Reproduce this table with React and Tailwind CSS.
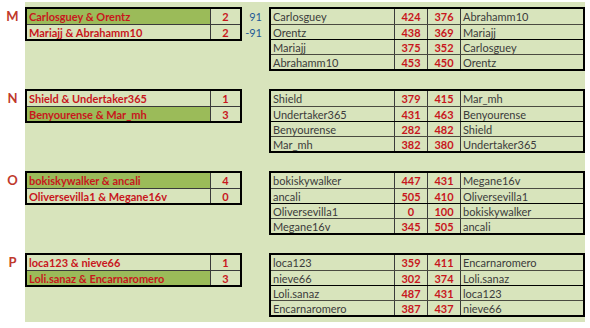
import React from 'react';

const sections = [
  {
    letter: 'M',
    pairs: [
      { name: 'Carlosguey & Orentz', score: 2, win: true, diff: '91' },
      { name: 'Mariajj & Abrahamm10', score: 2, diff: '-91' },
    ],
    games: [
      ['Carlosguey', 424, 376, 'Abrahamm10'],
      ['Orentz', 438, 369, 'Mariajj'],
      ['Mariajj', 375, 352, 'Carlosguey'],
      ['Abrahamm10', 453, 450, 'Orentz'],
    ],
  },
  {
    letter: 'N',
    pairs: [
      { name: 'Shield & Undertaker365', score: 1 },
      { name: 'Benyourense & Mar_mh', score: 3, win: true },
    ],
    games: [
      ['Shield', 379, 415, 'Mar_mh'],
      ['Undertaker365', 431, 463, 'Benyourense'],
      ['Benyourense', 282, 482, 'Shield'],
      ['Mar_mh', 382, 380, 'Undertaker365'],
    ],
  },
  {
    letter: 'O',
    pairs: [
      { name: 'bokiskywalker & ancali', score: 4, win: true },
      { name: 'Oliversevilla1 & Megane16v', score: 0 },
    ],
    games: [
      ['bokiskywalker', 447, 431, 'Megane16v'],
      ['ancali', 505, 410, 'Oliversevilla1'],
      ['Oliversevilla1', 0, 100, 'bokiskywalker'],
      ['Megane16v', 345, 505, 'ancali'],
    ],
  },
  {
    letter: 'P',
    pairs: [
      { name: 'loca123 & nieve66', score: 1 },
      { name: 'Loli.sanaz & Encarnaromero', score: 3, win: true },
    ],
    games: [
      ['loca123', 359, 411, 'Encarnaromero'],
      ['nieve66', 302, 374, 'Loli.sanaz'],
      ['Loli.sanaz', 487, 431, 'loca123'],
      ['Encarnaromero', 387, 437, 'nieve66'],
    ],
  },
];

const PairTable = ({ pairs }) => (
  <div className="w-[217px] border-2 border-black">
    {pairs.map((p, i) => (
      <div key={i} className={`flex h-[15px] ${i > 0 ? 'border-t border-[#3a3a3a]' : ''}`}>
        <div
          className={`w-[184px] border-r border-[#3a3a3a] pl-[2px] flex items-center font-bold text-[#c8161d] ${
            p.win ? 'bg-[#9bbb59]' : ''
          }`}
        >
          {p.name}
        </div>
        <div className="flex-1 flex items-center justify-center font-bold text-[#c8161d]">{p.score}</div>
      </div>
    ))}
  </div>
);

const DiffColumn = ({ pairs }) => (
  <div className="w-[27px] pt-[2px]">
    {pairs.map((p, i) => (
      <div key={i} className={`h-[15px] ${i > 0 ? 'mt-px' : ''} flex items-center justify-end pr-[7px] text-[#1f5a96]`}>
        {p.diff || ''}
      </div>
    ))}
  </div>
);

const GameTable = ({ games }) => (
  <div className="w-[316px] border-2 border-black">
    {games.map((g, i) => (
      <div
        key={i}
        className={`flex h-[15px] ${i === 2 ? 'border-t border-black' : i > 0 ? 'border-t border-[#4a4a40]' : ''}`}
      >
        <div className="w-[124px] border-r border-[#3a3a3a] pl-[2px] flex items-center text-[#3b3b3b]">{g[0]}</div>
        <div className="w-[33px] border-r border-[#3a3a3a] flex items-center justify-center font-bold text-[#c8161d]">
          {g[1]}
        </div>
        <div className="w-[33px] border-r border-[#3a3a3a] flex items-center justify-center font-bold text-[#c8161d]">
          {g[2]}
        </div>
        <div className="flex-1 pl-[2px] flex items-center text-[#3b3b3b]">{g[3]}</div>
      </div>
    ))}
  </div>
);

export default function App() {
  return (
    <div className="w-[590px] h-[328px] bg-white pt-[2px] flex text-[11px] leading-none font-['Lato',sans-serif]">
      <div className="w-[25px] pt-[5px] flex flex-col gap-[15px]">
        {sections.map((s) => (
          <div key={s.letter} className="h-[67px]">
            <div className="h-[19px] flex items-center justify-center font-bold text-[13px] text-[#c0392b]">
              {s.letter}
            </div>
          </div>
        ))}
      </div>
      <div className="w-[560px] h-[320px] bg-[#d8e4bc] pt-[5px] flex flex-col gap-[15px]">
        {sections.map((s) => (
          <div key={s.letter} className="flex items-start h-[67px]">
            <PairTable pairs={s.pairs} />
            <DiffColumn pairs={s.pairs} />
            <GameTable games={s.games} />
          </div>
        ))}
      </div>
    </div>
  );
}
